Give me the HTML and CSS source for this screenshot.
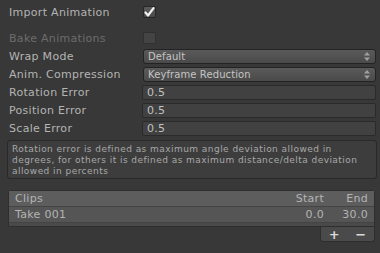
FILE: index.html
```html
<!DOCTYPE html>
<html lang="en">
<head>
    <meta charset="UTF-8">
    <meta name="viewport" content="width=device-width, initial-scale=1.0">
    <title>Animations</title>
    <link rel="stylesheet" href="styles.css">
</head>
<body>
    <div class="inspector">
        <div class="row">
            <span class="label">Import Animation</span>
            <span class="toggle">
                <svg width="11" height="10" viewBox="0 0 11 10"><path d="M1.5 5.5 L4 8.5 L9.5 1.2" fill="none" stroke="#f2f2f2" stroke-width="2.2" stroke-linecap="round" stroke-linejoin="round"/></svg>
            </span>
        </div>
        <div class="row spaced">
            <span class="label disabled">Bake Animations</span>
            <span class="toggle off"></span>
        </div>
        <div class="row">
            <span class="label">Wrap Mode</span>
            <div class="popup">
                <span>Default</span>
                <svg class="arrows" width="6" height="9" viewBox="0 0 6 9"><path d="M0 3.5 L3 0 L6 3.5 Z M0 5.5 L3 9 L6 5.5 Z" fill="#a0a0a0"/></svg>
            </div>
        </div>
        <div class="row">
            <span class="label">Anim. Compression</span>
            <div class="popup">
                <span>Keyframe Reduction</span>
                <svg class="arrows" width="6" height="9" viewBox="0 0 6 9"><path d="M0 3.5 L3 0 L6 3.5 Z M0 5.5 L3 9 L6 5.5 Z" fill="#a0a0a0"/></svg>
            </div>
        </div>
        <div class="row">
            <span class="label">Rotation Error</span>
            <div class="field">0.5</div>
        </div>
        <div class="row">
            <span class="label">Position Error</span>
            <div class="field">0.5</div>
        </div>
        <div class="row">
            <span class="label">Scale Error</span>
            <div class="field">0.5</div>
        </div>

        <div class="helpbox">Rotation error is defined as maximum angle deviation allowed in degrees, for others it is defined as maximum distance/delta deviation allowed in percents</div>

        <div class="clips">
            <div class="clips-head">
                <span class="name">Clips</span>
                <span class="num">Start</span>
                <span class="num end">End</span>
            </div>
            <div class="clips-row">
                <span class="name">Take 001</span>
                <span class="num">0.0</span>
                <span class="num end">30.0</span>
            </div>
        </div>
        <div class="clips-foot">
            <span class="btn">+</span>
            <span class="btn">&minus;</span>
        </div>
    </div>
</body>
</html>
```

FILE: styles.css
```css
* {
    box-sizing: border-box;
}
body {
    margin: 0;
    background-color: #383838;
    font-family: "DejaVu Sans", sans-serif;
    font-size: 11px;
    color: #b4b4b4;
}
.inspector {
    padding: 3px 4px 0 9px;
}
.row {
    display: flex;
    align-items: center;
    height: 18px;
}
.row.spaced {
    margin-top: 8px;
}
.label {
    width: 133px;
    flex: none;
    white-space: nowrap;
    letter-spacing: 0.3px;
}
.label.disabled {
    color: #6c6c6c;
}
.toggle {
    margin-left: 1px;
    width: 13px;
    height: 12px;
    border: 1px solid #262626;
    border-radius: 2px;
    background: linear-gradient(#5c5c5c, #4a4a4a);
    display: flex;
    align-items: center;
    justify-content: center;
}
.toggle.off {
    background: #444444;
    border-color: #303030;
}
.popup {
    margin-left: 1px;
    flex: 1;
    height: 15px;
    border: 1px solid #232323;
    border-radius: 3px;
    background: linear-gradient(#5a5a5a, #4a4a4a);
    color: #c4c4c4;
    display: flex;
    align-items: center;
    justify-content: space-between;
    padding: 0 5px 0 4px;
    font-size: 10px;
    letter-spacing: 0.1px;
}
.field {
    flex: 1;
    height: 15px;
    border: 1px solid #2a2a2a;
    border-radius: 2px;
    background: #414141;
    color: #c0c0c0;
    display: flex;
    align-items: center;
    padding-left: 4px;
    font-size: 11px;
    letter-spacing: 0.3px;
}
.helpbox {
    margin: 3px -1px 0 -2px;
    height: 39px;
    border: 1px solid #292929;
    border-radius: 3px;
    background: #3d3d3d;
    color: #a8a8a8;
    font-size: 9px;
    line-height: 11px;
    padding: 3px 12px 3px 4px;
    letter-spacing: 0.45px;
}
.clips {
    margin: 11px 1px 0 -1px;
    background: #4a4a4a;
    border: 1px solid #2e2e2e;
    border-radius: 3px 3px 0 0;
    padding-bottom: 3px;
}
.clips-head,
.clips-row {
    display: flex;
    align-items: center;
    height: 16px;
    padding: 0 6px 0 6px;
    letter-spacing: 0.3px;
}
.clips-head {
    background: #5d5d5d;
    border-bottom: 1px solid #444444;
}
.clips-row {
    background: #555555;
    border-bottom: 1px solid #444444;
}
.name {
    flex: 1;
}
.num {
    width: 40px;
    text-align: right;
}
.num.end {
    width: 44px;
}
.clips-foot {
    margin: 0 1px 0 auto;
    width: 55px;
    height: 15px;
    background: #4a4a4a;
    border: 1px solid #2e2e2e;
    border-top: none;
    border-radius: 0 0 3px 3px;
    display: flex;
    justify-content: space-around;
    align-items: center;
    font-weight: bold;
    color: #d8d8d8;
    font-size: 13px;
}
.btn {
    line-height: 13px;
}
```
